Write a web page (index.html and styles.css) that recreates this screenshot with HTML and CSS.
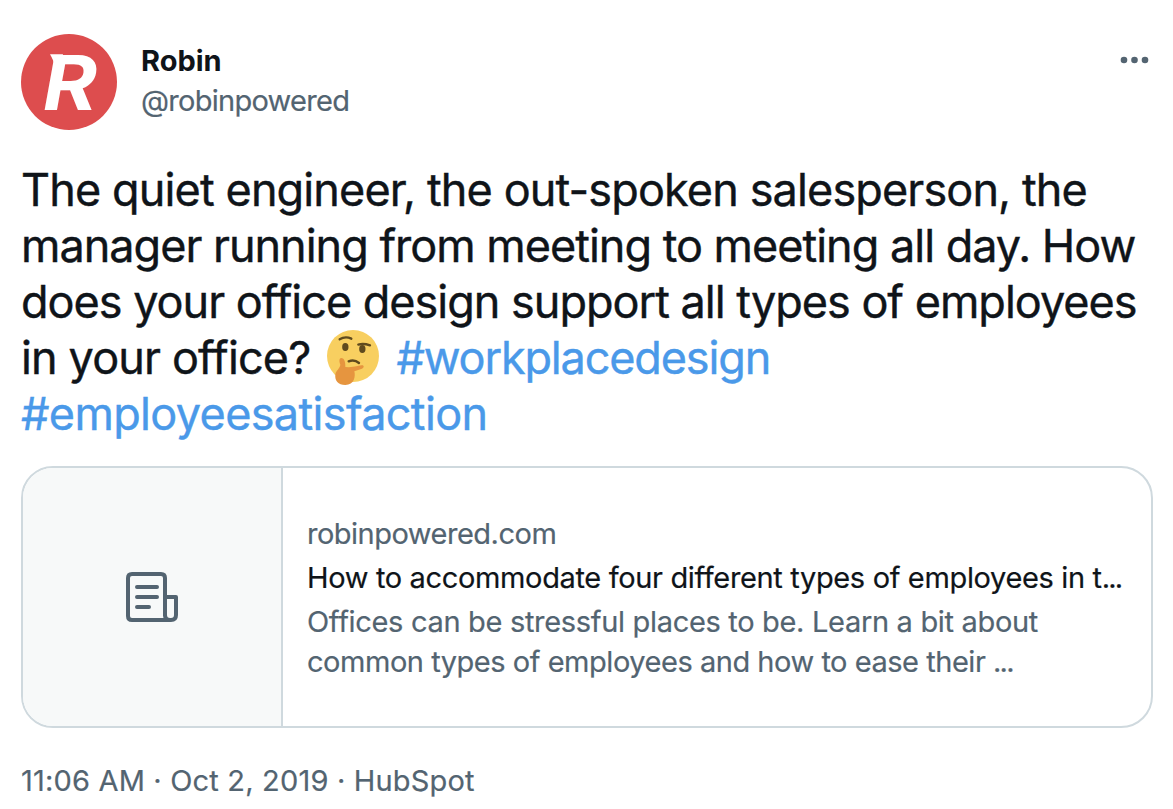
FILE: index.html
```
<!DOCTYPE html>
<html lang="en">
<head>
    <meta charset="UTF-8">
    <meta name="viewport" content="width=device-width, initial-scale=1.0">
    <title>Robin on Twitter</title>
    <link rel="stylesheet" href="styles.css">
</head>
<body>

    <article class="tweet">
        <!-- Author -->
        <header>
            <svg class="avatar" viewBox="0 0 96 96">
                <circle cx="48" cy="48" r="48" fill="#dd4d4e"/>
                <path d="M29 20.300H42L40 32H33.500Q33 27 29 20.300Z" fill="#fff"/>
                <text class="avatar-letter" x="22" y="75.500" textLength="54" lengthAdjust="spacingAndGlyphs">R</text>
            </svg>
            <div class="author">
                <span class="name">Robin</span>
                <span class="handle">@robinpowered</span>
            </div>
            <svg class="more" viewBox="0 0 30 8">
                <circle cx="4" cy="4" r="3.300"/>
                <circle cx="14.500" cy="4" r="3.300"/>
                <circle cx="25" cy="4" r="3.300"/>
            </svg>
        </header>

        <!-- Tweet text -->
        <p class="text">
            <span class="line line-1">The quiet engineer, the out-spoken salesperson, the</span>
            <span class="line line-2">manager running from meeting to meeting all day. How</span>
            <span class="line line-3">does your office design support all types of employees</span>
            <span class="line line-4"><span class="question">in your office?</span>
                <svg class="emoji" viewBox="0 0 156 165">
                    <circle cx="78" cy="78" r="78" fill="#f8cf60"/>
                    <path d="M38 28Q55 17 73 26M94 44Q109 39 129 46" fill="none" stroke="#5f4a1e" stroke-width="7" stroke-linecap="round"/>
                    <ellipse cx="55" cy="51" rx="9.500" ry="12" fill="#5f4a1e"/>
                    <ellipse cx="106" cy="57" rx="9.500" ry="12" fill="#5f4a1e"/>
                    <path d="M65 94Q82 87 96 99" fill="none" stroke="#5f4a1e" stroke-width="7" stroke-linecap="round"/>
                    <path d="M43 84C52 84 56 96 55 111Q78 113 103 106C112 104 112 113 105 116L82 124C86 139 82 165 55 165C33 165 23 151 25 134C26 122 39 115 40 104C36 95 36 84 43 84Z" fill="#e6953f"/>
                </svg>
                <a class="tag-1">#workplacedesign</a></span>
            <span class="line line-5"><a>#employeesatisfaction</a></span>
        </p>

        <!-- Link preview -->
        <div class="card">
            <div class="thumb">
                <svg class="news" viewBox="0 0 52 50" fill="none" stroke="#536471" stroke-width="4" stroke-linecap="round" stroke-linejoin="round">
                    <path d="M39 44V6Q39 2 35 2H6Q2 2 2 6V44Q2 48 6 48H45Q50 48 50 43V25H39M39 43Q39 48 44 48"/>
                    <path d="M11 15H31M11 25H31M11 35H23"/>
                </svg>
            </div>
            <div class="info">
                <span class="domain">robinpowered.com</span>
                <span class="title">How to accommodate four different types of employees in t<span class="dots">...</span></span>
                <span class="desc-1">Offices can be stressful places to be. Learn a bit about</span>
                <span class="desc-2">common types of employees and how to ease their <span class="dots">...</span></span>
            </div>
        </div>

        <footer>11:06 AM · Oct 2, 2019 · HubSpot</footer>
    </article>

</body>
</html>
```
FILE: styles.css
```
body {
    font-family: Inter, "Liberation Sans", sans-serif;
    margin: 0;
    background-color: #fff;
    color: #0f1419;
}

.tweet {
    box-sizing: border-box;
    height: 809px;
    padding: 34px 20px 0 21px;
    overflow: hidden;
}

header {
    display: flex;
    height: 96px;
}

.avatar {
    width: 96px;
    height: 96px;
}

.avatar-letter {
    font: italic 700 76px Inter, sans-serif;
    fill: #fff;
}

.author {
    display: flex;
    flex-direction: column;
    align-items: flex-start;
    flex: 1;
    padding: 7px 0 0 24px;
    font-size: 29px;
    line-height: 40px;
}

.name {
    font-weight: 700;
}

.handle {
    color: #536471;
    letter-spacing: -0.72px;
    -webkit-text-stroke: 0.2px;
}

.more {
    width: 30px;
    height: 8px;
    margin: 22px 3px 0 0;
    fill: #536471;
}

.text {
    margin: 32px 0 0;
    font-size: 45px;
    line-height: 56px;
    -webkit-text-stroke: 0.4px;
}

.line {
    display: flex;
    width: max-content;
    height: 56px;
    white-space: nowrap;
}

.line-1 {
    letter-spacing: -0.87px;
}

.line-2 {
    letter-spacing: -1px;
}

.line-3 {
    letter-spacing: -1px;
}

.line-4 {
    letter-spacing: -0.85px;
}

.line-5 {
    letter-spacing: -0.65px;
}

.tag-1 {
    letter-spacing: -1.15px;
}

.text a {
    color: #4a99e9;
}

.emoji {
    width: 52px;
    height: 55px;
    margin: 0 17px 0 17px;
}

.card {
    display: flex;
    box-sizing: border-box;
    height: 262px;
    margin-top: 24px;
    border: 2px solid #cfd9de;
    border-radius: 32px;
    overflow: hidden;
}

.thumb {
    display: flex;
    align-items: center;
    justify-content: center;
    box-sizing: border-box;
    width: 260px;
    border-right: 2px solid #cfd9de;
    background-color: #f7f9f9;
}

.news {
    width: 52px;
    height: 50px;
}

.info {
    display: flex;
    flex-direction: column;
    align-items: flex-start;
    padding: 46px 0 0 24px;
    font-size: 29px;
    line-height: 40px;
    color: #536471;
    white-space: nowrap;
    -webkit-text-stroke: 0.2px;
}

.domain {
    letter-spacing: -0.5px;
}

.title {
    margin: 4px 0;
    color: #0f1419;
    letter-spacing: -0.35px;
}

.desc-1 {
    letter-spacing: -0.32px;
}

.desc-2 {
    letter-spacing: -0.47px;
}

.dots {
    letter-spacing: -1.8px;
}

footer {
    width: max-content;
    margin-top: 33px;
    font-size: 29px;
    line-height: 40px;
    letter-spacing: 0.18px;
    color: #536471;
    -webkit-text-stroke: 0.2px;
}
```
